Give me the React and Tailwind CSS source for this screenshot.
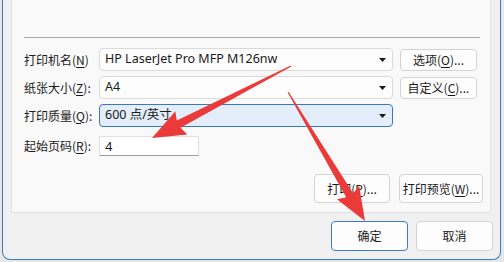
import React from 'react'

const cjk = { fontFamily: '"Noto Sans CJK SC", "Noto Sans", sans-serif' }
const latin = { fontFamily: '"Noto Sans", "Noto Sans CJK SC", sans-serif' }

// tapered red arrow, tail -> tip
const arrowPoints = (tail, tip, headLen, headW, shaftW) => {
  const dx = tip[0] - tail[0]
  const dy = tip[1] - tail[1]
  const len = Math.hypot(dx, dy)
  const ux = dx / len
  const uy = dy / len
  const nx = -uy
  const ny = ux
  const bx = tip[0] - ux * headLen
  const by = tip[1] - uy * headLen
  const pts = [
    [tail[0] + nx * 0.6, tail[1] + ny * 0.6],
    [bx + nx * shaftW, by + ny * shaftW],
    [bx - ux * 3 + nx * headW, by - uy * 3 + ny * headW],
    [tip[0], tip[1]],
    [bx - ux * 3 - nx * headW, by - uy * 3 - ny * headW],
    [bx - nx * shaftW, by - ny * shaftW],
    [tail[0] - nx * 0.6, tail[1] - ny * 0.6],
  ]
  return pts.map(p => `${p[0].toFixed(1)},${p[1].toFixed(1)}`).join(' ')
}

const Caret = () => (
  <svg width="7" height="4" viewBox="0 0 7 4" className="shrink-0">
    <path d="M0 0H7L3.5 4Z" fill="#1a1a1a" />
  </svg>
)

const Label = ({ text, mn }) => (
  <div className="w-[75px] shrink-0 text-[12px] text-[#1b1b1b] leading-none" style={cjk}>
    {text}(<span className="underline underline-offset-2">{mn}</span>):
  </div>
)

const Select = ({ value, active = false }) => (
  <div
    className={`w-[294px] h-[23px] flex items-center justify-between pl-[5px] pr-[6px] rounded-[4px] border ${active ? 'bg-[#e3eefa] border-[#3a78bd]' : 'bg-[#fdfdfd] border-[#dadada]'}`}
  >
    <span className="text-[12.5px] text-[#1a1a1a] leading-none" style={latin}>{value}</span>
    <Caret />
  </div>
)

const Button = ({ children, className = '', primary = false }) => (
  <div
    className={`flex items-center justify-center rounded-[4px] border text-[12px] text-[#1b1b1b] leading-none ${primary ? 'border-[#3f7cbd] bg-[#fdfdfd]' : 'border-[#d3d3d3] bg-[#fdfdfd]'} ${className}`}
    style={cjk}
  >
    {children}
  </div>
)

export default function App() {
  return (
    <div className="relative w-[504px] h-[262px] overflow-hidden bg-[#e7e7e7]">
      <div className="ml-[2px] w-[499px] h-[260px] border-x border-b border-[#3b7cc4] rounded-b-[8px] bg-[#f0f0f0] flex flex-col">
        <div className="ml-[8px] w-[480px] h-[213px] bg-[#f9f9f9] border-x border-b border-[#e2e2e2] flex flex-col">
          <div className="mt-[37px] ml-[12px] w-[456px] h-px bg-[#a9a9a9]" />

          <div className="mt-[10px] ml-[12px] flex items-center">
            <div className="w-[75px] shrink-0 text-[12px] text-[#1b1b1b] leading-none" style={cjk}>
              打印机名(<span className="underline underline-offset-2">N</span>)
            </div>
            <Select value="HP LaserJet Pro MFP M126nw" />
            <Button className="ml-[7px] w-[77px] h-[22px]">
              选项(<span className="underline underline-offset-2">O</span>)...
            </Button>
          </div>

          <div className="mt-[5px] ml-[12px] flex items-center">
            <Label text="纸张大小" mn="Z" />
            <Select value="A4" />
            <Button className="ml-[7px] w-[77px] h-[22px]">
              自定义(<span className="underline underline-offset-2">C</span>)...
            </Button>
          </div>

          <div className="mt-[5px] ml-[12px] flex items-center">
            <Label text="打印质量" mn="Q" />
            <Select value="600 点/英寸" active />
          </div>

          <div className="mt-[9px] ml-[12px] flex items-center">
            <Label text="起始页码" mn="R" />
            <div className="w-[100px] h-[20px] flex items-center pl-[5px] bg-white border border-[#e0e0e0] border-b-[#9a9a9a]">
              <span className="text-[13px] text-[#1a1a1a] leading-none" style={latin}>4</span>
            </div>
          </div>

          <div className="mt-[18px] ml-[302px] flex gap-[9px]">
            <Button className="w-[76px] h-[29px]">
              打印(<span className="underline underline-offset-2">P</span>)...
            </Button>
            <Button className="w-[84px] h-[29px]">
              打印预览(<span className="underline underline-offset-2">W</span>)...
            </Button>
          </div>
        </div>

        <div className="mt-[8px] ml-[328px] flex gap-[8px]">
          <Button primary className="w-[77px] h-[30px]">确定</Button>
          <Button className="w-[77px] h-[30px]">取消</Button>
        </div>
      </div>

      <svg className="absolute inset-0 pointer-events-none" width="504" height="262" viewBox="0 0 504 262">
        <polygon points={arrowPoints([291, 66], [152, 138], 30, 13, 4)} fill="#ea3a3a" />
        <polygon points={arrowPoints([288, 92], [365, 221], 30, 13, 4)} fill="#ea3a3a" />
      </svg>
    </div>
  )
}
